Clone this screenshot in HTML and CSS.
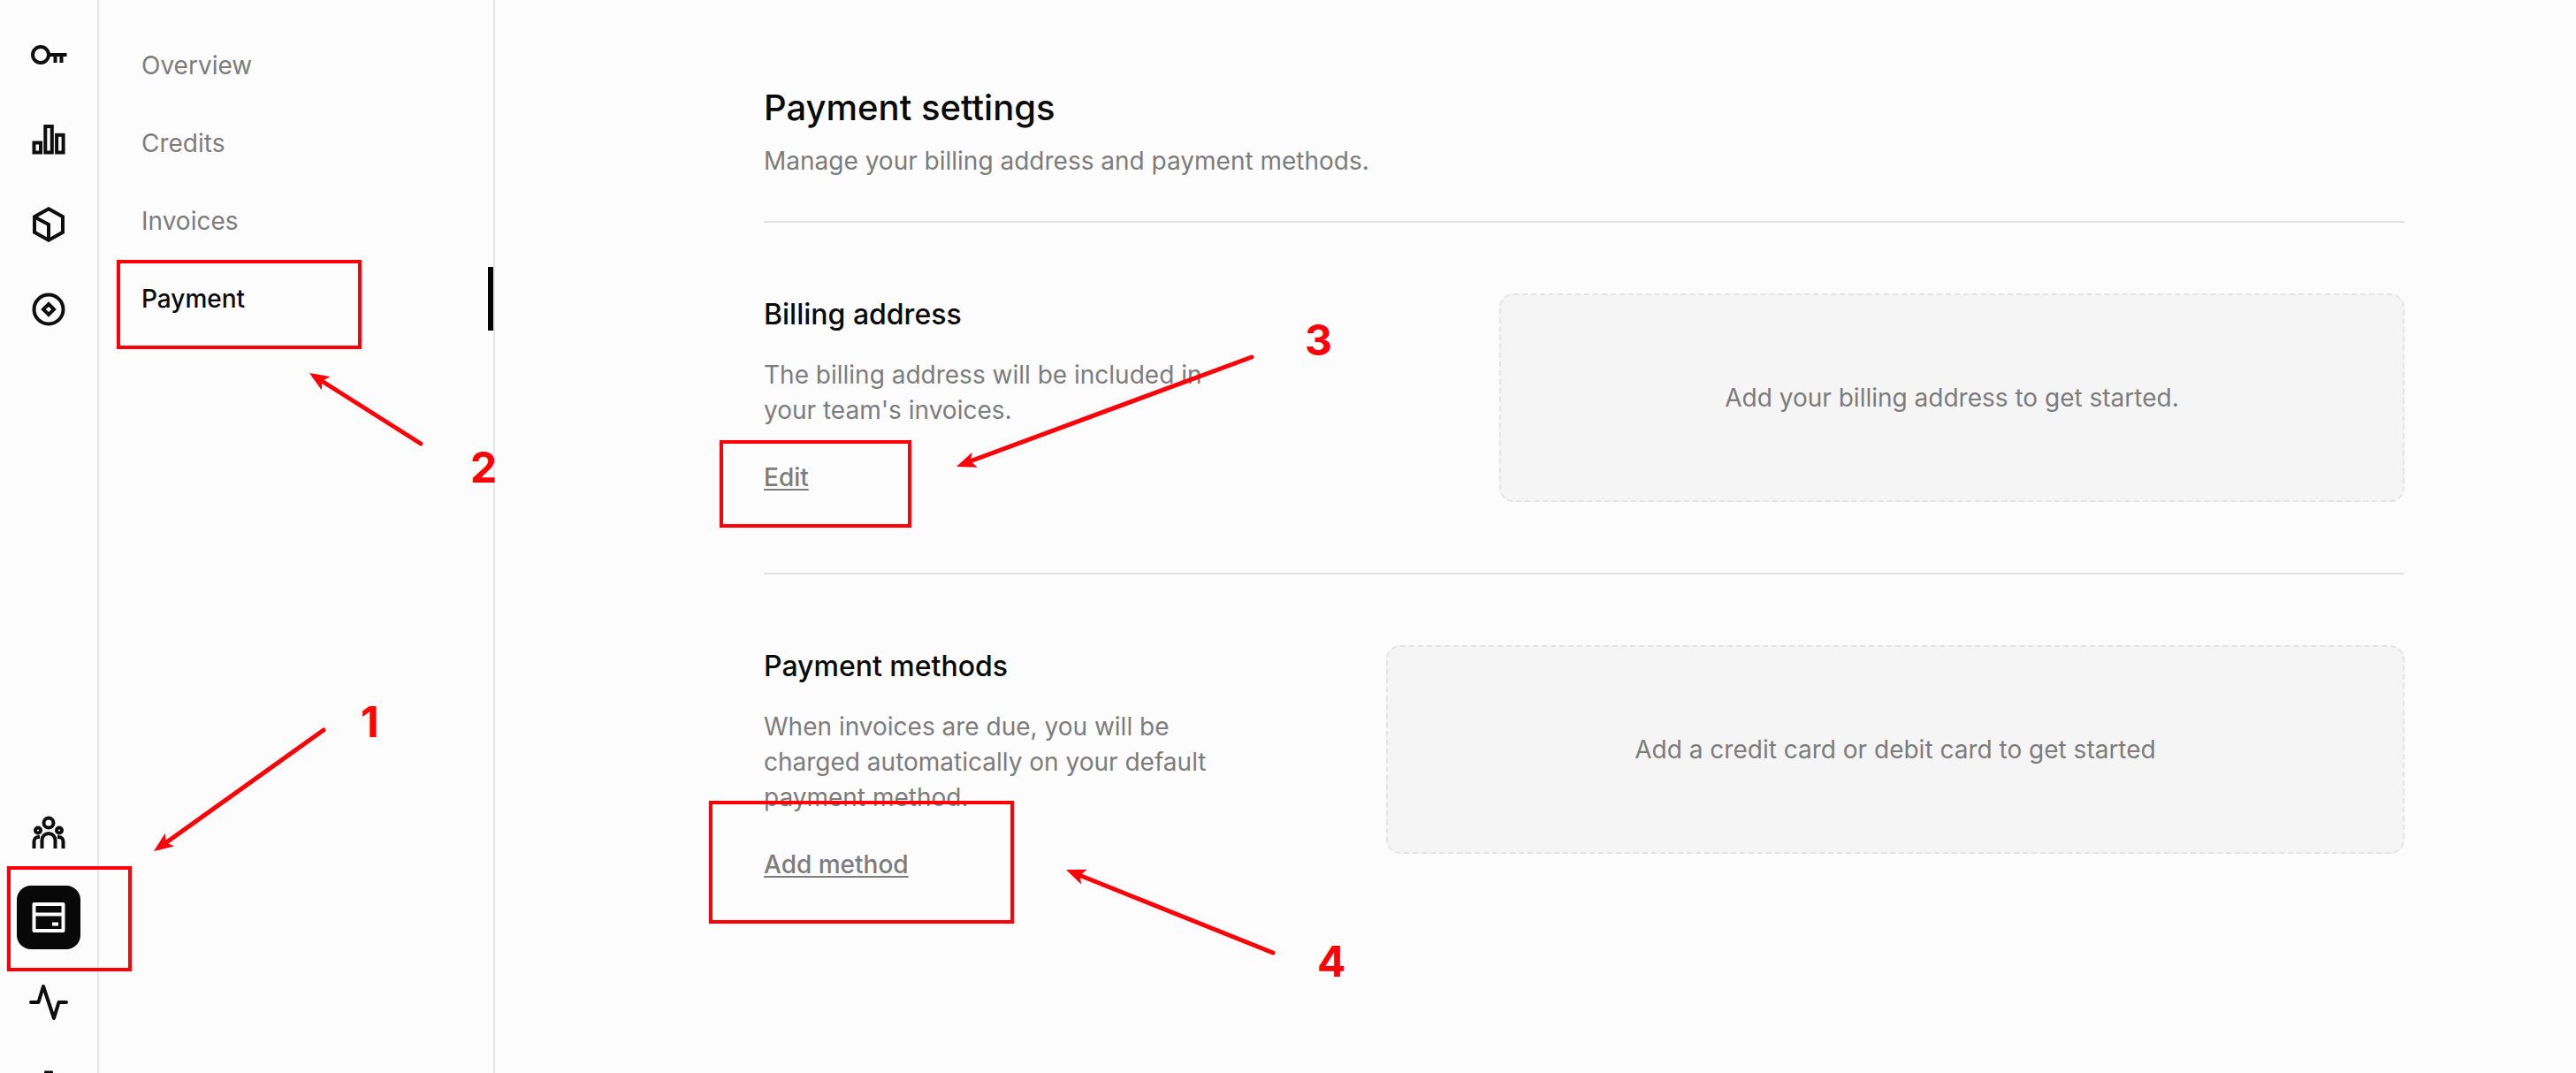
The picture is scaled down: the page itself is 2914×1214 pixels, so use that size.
FILE: index.html
```html
<!DOCTYPE html>
<html lang="en">
<head>
<meta charset="utf-8">
<title>Payment settings</title>
<link rel="stylesheet" href="styles.css">
</head>
<body>
<div class="app">
  <nav class="rail" aria-label="Main">
    <div class="rail-group">
      <a class="rail-item" href="#keys" aria-label="API keys">
        <svg class="icon" viewBox="0 0 48 48"><circle cx="15" cy="24" r="9"/><path d="M24 24h20.500M31.500 24v9M38.500 24v9"/></svg>
      </a>
      <a class="rail-item" href="#usage" aria-label="Usage">
        <svg class="icon" viewBox="0 0 48 48"><path d="M7.500 27.500h7.500v11h-7.500zM20.300 9h7.500v29.500h-7.500zM33.100 18.700h7.500v19.800h-7.500z"/></svg>
      </a>
      <a class="rail-item" href="#models" aria-label="Models">
        <svg class="icon" viewBox="0 0 48 48"><path d="M24 6.200l16 9v17.600l-16 9-16-9V15.200zM8 15.500l16 8.500v18"/></svg>
      </a>
      <a class="rail-item" href="#explore" aria-label="Explore">
        <svg class="icon" viewBox="0 0 48 48"><circle cx="24" cy="24" r="16.500"/><path d="M24 18l6 6-6 6-6-6z"/></svg>
      </a>
    </div>
    <div class="rail-group">
      <a class="rail-item" href="#team" aria-label="Team">
        <svg class="icon" viewBox="0 0 48 48"><circle cx="24" cy="13" r="5.500"/><circle cx="12" cy="21.500" r="3"/><circle cx="36" cy="21.500" r="3"/><path d="M16.500 42V32.500a7.500 7.500 0 0 1 15 0V42M7.500 42V34a5 5 0 0 1 5-5H14M40.500 42V34a5 5 0 0 0-5-5H34"/></svg>
      </a>
      <a class="rail-item rail-item-active" href="#billing" aria-label="Billing">
        <svg class="icon" viewBox="0 0 48 48"><path d="M7.500 9h33v30h-33zM7.500 20.500h33M28 31.500h7" stroke-linejoin="round"/></svg>
      </a>
      <a class="rail-item" href="#activity" aria-label="Activity">
        <svg class="icon icon-round" viewBox="0 0 48 48"><path d="M4 24h8.500L18 6l12 36 5.500-18H44"/></svg>
      </a>
      <a class="rail-item" href="#settings" aria-label="Settings">
        <svg class="icon" viewBox="0 0 48 48"><path d="M21 7.500h6l1 5 6 3 6-1 3 6-4 5 4 5-3 6-6-1-6 3-1 5h-6l-1-5-6-3-6 1-3-6 4-5-4-5 3-6 6 1 6-3z"/></svg>
      </a>
    </div>
  </nav>

  <nav class="subnav" aria-label="Billing">
    <a class="subnav-link" href="#overview">Overview</a>
    <a class="subnav-link" href="#credits">Credits</a>
    <a class="subnav-link" href="#invoices">Invoices</a>
    <a class="subnav-link subnav-link-active" href="#payment" aria-current="page">Payment</a>
  </nav>

  <main class="main">
    <header class="page-header">
      <h1 class="page-title">Payment settings</h1>
      <p class="text">Manage your billing address and payment methods.</p>
    </header>
    <section class="section">
      <div class="section-info">
        <h2 class="section-title">Billing address</h2>
        <p class="text">The billing address will be included in your team's invoices.</p>
        <button class="link-button" type="button">Edit</button>
      </div>
      <div class="placeholder placeholder-address">Add your billing address to get started.</div>
    </section>
    <section class="section">
      <div class="section-info">
        <h2 class="section-title">Payment methods</h2>
        <p class="text">When invoices are due, you will be charged automatically on your default payment method.</p>
        <button class="link-button" type="button">Add method</button>
      </div>
      <div class="placeholder placeholder-methods">Add a credit card or debit card to get started</div>
    </section>
  </main>
</div>

<div class="guide">
  <div class="frame frame-1"></div>
  <div class="frame frame-2"></div>
  <div class="frame frame-3"></div>
  <div class="frame frame-4"></div>
  <svg class="arrows" viewBox="0 0 2914 1214">
    <defs>
      <marker id="head" viewBox="0 0 22 18" refX="22" refY="9" markerWidth="22" markerHeight="18" markerUnits="userSpaceOnUse" orient="auto"><path d="M22 9L0 0l5 9-5 9z" fill="#ff0009"/></marker>
    </defs>
    <path d="M366 826L180 959"/><path class="head" d="M366 826L174 963"/>
    <path d="M476 502L356 426"/><path class="head" d="M476 502L350 422"/>
    <path d="M1416 404L1089 525"/><path class="head" d="M1416 404L1082 528"/>
    <path d="M1440 1078L1213 987"/><path class="head" d="M1440 1078L1206 984"/>
  </svg>
  <span class="step step-1">1</span>
  <span class="step step-2">2</span>
  <span class="step step-3">3</span>
  <span class="step step-4">4</span>
</div>
</body>
</html>
```
FILE: styles.css
```css
* { box-sizing: border-box; }

body {
  margin: 0;
  background: #fcfcfc;
  color: #0a0a0a;
  font-family: Inter, "Liberation Sans", sans-serif;
  font-size: 28px;
  line-height: 40px;
}

h1, h2, p { margin: 0; font-weight: 400; }

.app {
  display: flex;
  height: 100vh;
  overflow: hidden;
}

/* Icon rail */
.rail {
  display: flex;
  flex: none;
  flex-direction: column;
  justify-content: space-between;
  width: 112px;
  padding: 26px 19px 0;
  border-right: 2px solid #e5e5e5;
}

.rail-group {
  display: flex;
  flex-direction: column;
  gap: 24px;
}

.rail-group:last-child { margin-bottom: -52px; }

.rail-item {
  display: flex;
  align-items: center;
  justify-content: center;
  width: 72px;
  height: 72px;
  border-radius: 16px;
  color: #0e0e0e;
}

.rail-item-active {
  background: #080808;
  color: #fcfcfc;
}

.icon {
  width: 48px;
  height: 48px;
  fill: none;
  stroke: currentColor;
  stroke-width: 4;
}

.icon-round {
  stroke-linecap: round;
  stroke-linejoin: round;
}

/* Billing navigation */
.subnav {
  display: flex;
  flex: none;
  flex-direction: column;
  gap: 16px;
  width: 448px;
  padding: 38px 0 38px 48px;
  border-right: 2px solid #e5e5e5;
}

.subnav-link {
  height: 72px;
  color: #7c7c7c;
  line-height: 72px;
  text-decoration: none;
}

.subnav-link-active {
  border-right: 6px solid #050505;
  color: #0a0a0a;
  font-weight: 500;
}

/* Content */
.main {
  flex: 1;
  padding: 96px 194px 0 304px;
}

.page-header {
  display: flex;
  flex-direction: column;
  gap: 14px;
  padding-bottom: 48px;
}

.page-title {
  font-size: 40px;
  font-weight: 500;
  line-height: 52px;
}

.text { color: #7c7c7c; }

.section {
  display: flex;
  align-items: flex-start;
  justify-content: space-between;
  padding: 80px 0;
  border-top: 2px solid #e2e2e2;
}

.section-info {
  display: flex;
  flex-direction: column;
  align-items: flex-start;
  width: 512px;
}

.section-title {
  margin-bottom: 24px;
  font-size: 32px;
  font-weight: 500;
  line-height: 48px;
}

.link-button {
  margin-top: 36px;
  padding: 0;
  border: 0;
  background: none;
  color: #7c7c7c;
  font: inherit;
  font-weight: 500;
  text-decoration: underline 2px;
  text-decoration-skip-ink: none;
  text-underline-offset: 3px;
}

.placeholder {
  display: flex;
  align-items: center;
  justify-content: center;
  height: 236px;
  border: 2px dashed #e4e4e4;
  border-radius: 16px;
  background: #f5f5f5;
  color: #7c7c7c;
}

.placeholder-address { width: 1024px; }
.placeholder-methods { width: 1152px; }

/* Step-by-step guide drawn over the page */
.guide {
  position: absolute;
  inset: 0;
  overflow: hidden;
  pointer-events: none;
}

.frame {
  position: absolute;
  border: 4px solid #ff0009;
}

.frame-1 { left: 8px; top: 980px; width: 141px; height: 119px; }
.frame-2 { left: 132px; top: 294px; width: 277px; height: 101px; }
.frame-3 { left: 814px; top: 498px; width: 217px; height: 99px; }
.frame-4 { left: 802px; top: 906px; width: 345px; height: 139px; }

.arrows {
  position: absolute;
  top: 0;
  left: 0;
  width: 2914px;
  height: 1214px;
  fill: none;
  stroke: #ff0009;
  stroke-width: 5;
  stroke-linecap: round;
}

.arrows marker path { stroke: none; }

.arrows .head {
  stroke: none;
  marker-end: url(#head);
}

.step {
  position: absolute;
  color: #ff0009;
  font-size: 48px;
  font-weight: 700;
  line-height: 48px;
}

.step-1 { left: 408px; top: 793px; }
.step-2 { left: 532px; top: 505px; }
.step-3 { left: 1476px; top: 361px; }
.step-4 { left: 1490px; top: 1064px; }
```
